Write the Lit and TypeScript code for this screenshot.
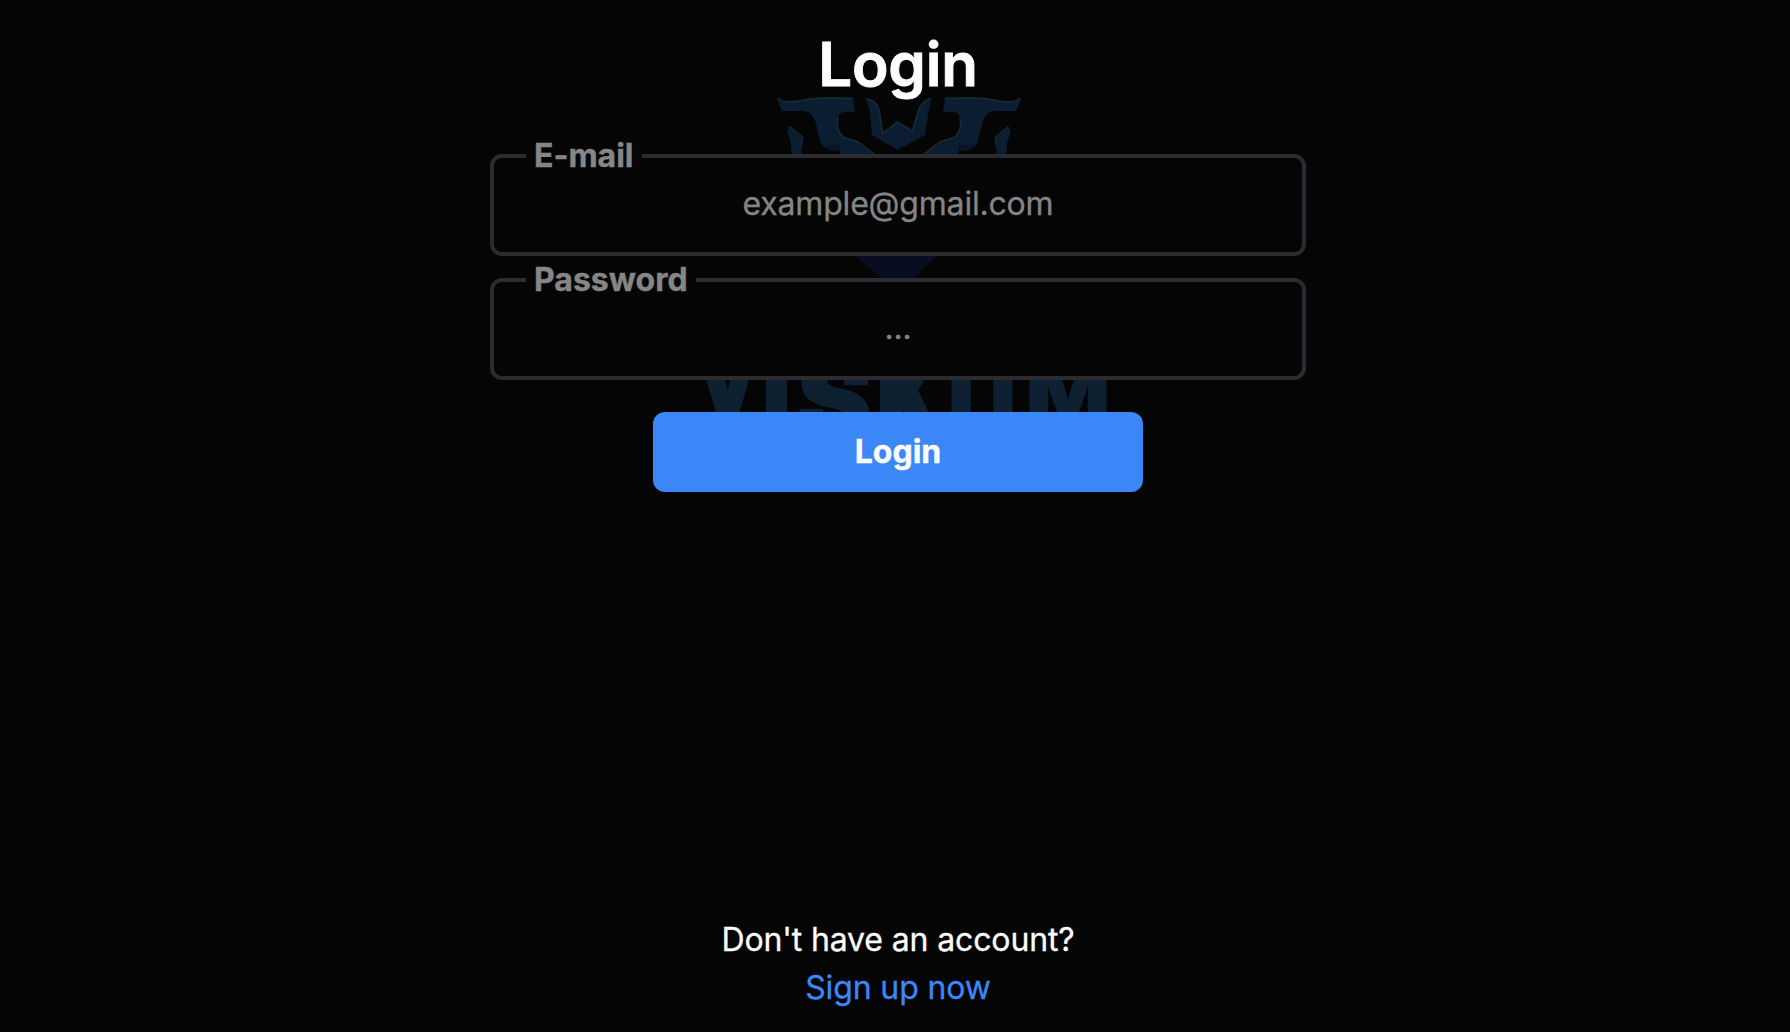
import { LitElement, html, svg, css } from "lit";
import { customElement, property } from "lit/decorators.js";

interface Glyph {
  char: string;
  x: number;
  y: number;
  size: number;
  width: number;
  stroke: number;
}

const WORDMARK: Glyph[] = [
  { char: "V", x: 1, y: 317, size: 76, width: 53, stroke: 5 },
  { char: "I", x: 61, y: 337, size: 84, width: 31, stroke: 0 },
  { char: "S", x: 98, y: 341, size: 108, width: 73, stroke: 3 },
  { char: "K", x: 180, y: 333, size: 96, width: 55, stroke: 9 },
  { char: "U", x: 247, y: 350, size: 106, width: 70, stroke: 0 },
  { char: "M", x: 326, y: 322, size: 68, width: 84, stroke: 1 },
];

@customElement("brand-watermark")
class BrandWatermark extends LitElement {
  static styles = css`
    :host { display: block; }
    .art { display: block; width: 420px; height: 370px; filter: blur(0.7px); }
    .word { font-family: Inter, sans-serif; font-weight: 900; fill: #0e2133; stroke: #0e2133; }
  `;

  private wing() {
    return svg`
      <path fill="#0a1d31" d="M76.5 1 C80 3 84 5 90 4.5 C101 4 110 .5 122 .3 L153 .6 L155 15.5 C146 14 140 15 138 20 C136 28 138 36 143 40 C147 43 153 42 158 45 L175 58 L140 58 L139 52 C132 55 125 52 121 46 C117 38 118 27 113 20 C109 13 103 14 96 14 L82 14 Z"/>
      <path fill="none" stroke="#152a33" stroke-width="1.8" d="M78 1.5 C81 4 85 5.2 90 5 C101 4.5 110 1.2 122 1.2 L153 1.5 M138 20 C136 28 138 36 143 40 C147 43 153 42 158 45 L175 58"/>
      <path fill="#08152c" d="M120 46 C127 50 134 49 139 46 L140 53 C132 56 124 52 120 46 Z"/>
      <path fill="#0b1e2f" d="M90 29 L103.5 40 L101 58 L91.500 58 L91 46 L88 37 Z"/>
      <path fill="none" stroke="#152a33" stroke-width="1" d="M88 36 L90 29.500 L103 40 L101 48"/>
    `;
  }

  render() {
    return html`
      <svg class="art" viewBox="0 0 420 370" aria-hidden="true">
        ${this.wing()}
        <g transform="translate(398 0) scale(-1 1)">${this.wing()}</g>
        <path fill="#0a1d31" d="M165.500 1 L173 3 C177 6 179 10 180 15 L183 35.500 L197.500 24 L212 33 L217 15 C219 8 223 2 231 1 L229 12 L225 38 L197.500 53 L172 38 L169.500 12 Z"/>
        <path fill="none" stroke="#152a33" stroke-width="1.600" d="M166 1.500 L173 4 C177 7 178.500 10 179.500 15 L182.500 36.500 L197.500 25 L212.500 34 L218 15 C220 8 224 3 231 1.500"/>
        <path fill="#080d22" d="M155 158 L238 158 L211 184 L184 184 Z"/>
        ${WORDMARK.map(
          (g) => svg`<text class="word" x=${g.x} y=${g.y} font-size=${g.size} textLength=${g.width}
            lengthAdjust="spacingAndGlyphs" stroke-width=${g.stroke}>${g.char}</text>`,
        )}
      </svg>
    `;
  }
}

@customElement("text-field")
class TextField extends LitElement {
  @property() label = "";
  @property() placeholder = "";
  @property() type = "text";

  static styles = css`
    :host { display: block; }
    .box {
      margin: 0; padding: 0 32px 24px; min-width: 0;
      border: 4px solid #2c2c30; border-radius: 12px; background: #050505;
      box-sizing: border-box; height: 124px;
    }
    .label { padding: 0 8px; font-weight: 700; color: #868686; line-height: 48px; -webkit-text-stroke: 0.4px currentColor; }
    .input {
      display: block; box-sizing: border-box; width: 100%; height: 48px; padding: 0;
      border: 0; outline: 0; background: transparent; color: #fff;
      font: inherit; line-height: 48px; text-align: center; letter-spacing: -0.19px;
    }
    .input::placeholder { color: #858585; opacity: 1; -webkit-text-stroke: 0.3px #858585; }
  `;

  render() {
    return html`
      <fieldset class="box">
        <legend class="label">${this.label}</legend>
        <input class="input" type=${this.type} placeholder=${this.placeholder} />
      </fieldset>
    `;
  }
}

@customElement("app-root")
class AppRoot extends LitElement {
  static styles = css`
    :host { display: block; }
    .page {
      position: relative; box-sizing: border-box; height: 1032px; overflow: hidden;
      padding: 16px 0 19px 6px; display: flex; flex-direction: column; align-items: center;
      background: #050505; border-bottom: 1px solid #000;
      font-family: Inter, sans-serif; font-size: 32px; line-height: 48px; color: #fdfdfd;
    }
    .mark { position: absolute; left: 700px; top: 97px; }
    .title { position: relative; margin: 0; font-size: 60px; font-weight: 600; line-height: 96px; letter-spacing: -0.2px; -webkit-text-stroke: 0.9px currentColor; }
    .form { position: relative; display: flex; flex-direction: column; align-items: center; width: 816px; margin-top: 20px; }
    .field { width: 100%; }
    .submit {
      width: 490px; height: 80px; margin-top: 32px; padding: 0; border: 0; border-radius: 12px;
      background: #3c87f8; color: #fdfdfd; font: inherit; font-weight: 700; -webkit-text-stroke: 0.4px currentColor;
    }
    .footer { margin-top: auto; display: flex; flex-direction: column; align-items: center; letter-spacing: -0.13px; -webkit-text-stroke: 0.3px currentColor; }
    .link { color: #3c87f8; text-decoration: none; }
  `;

  render() {
    return html`
      <main class="page">
        <brand-watermark class="mark"></brand-watermark>
        <h1 class="title">Login</h1>
        <form class="form">
          <text-field class="field" label="E-mail" type="email" placeholder="example@gmail.com"></text-field>
          <text-field class="field" label="Password" type="password" placeholder="..."></text-field>
          <button class="submit" type="button">Login</button>
        </form>
        <footer class="footer">
          <span>Don't have an account?</span>
          <a class="link" href="#">Sign up now</a>
        </footer>
      </main>
    `;
  }
}
